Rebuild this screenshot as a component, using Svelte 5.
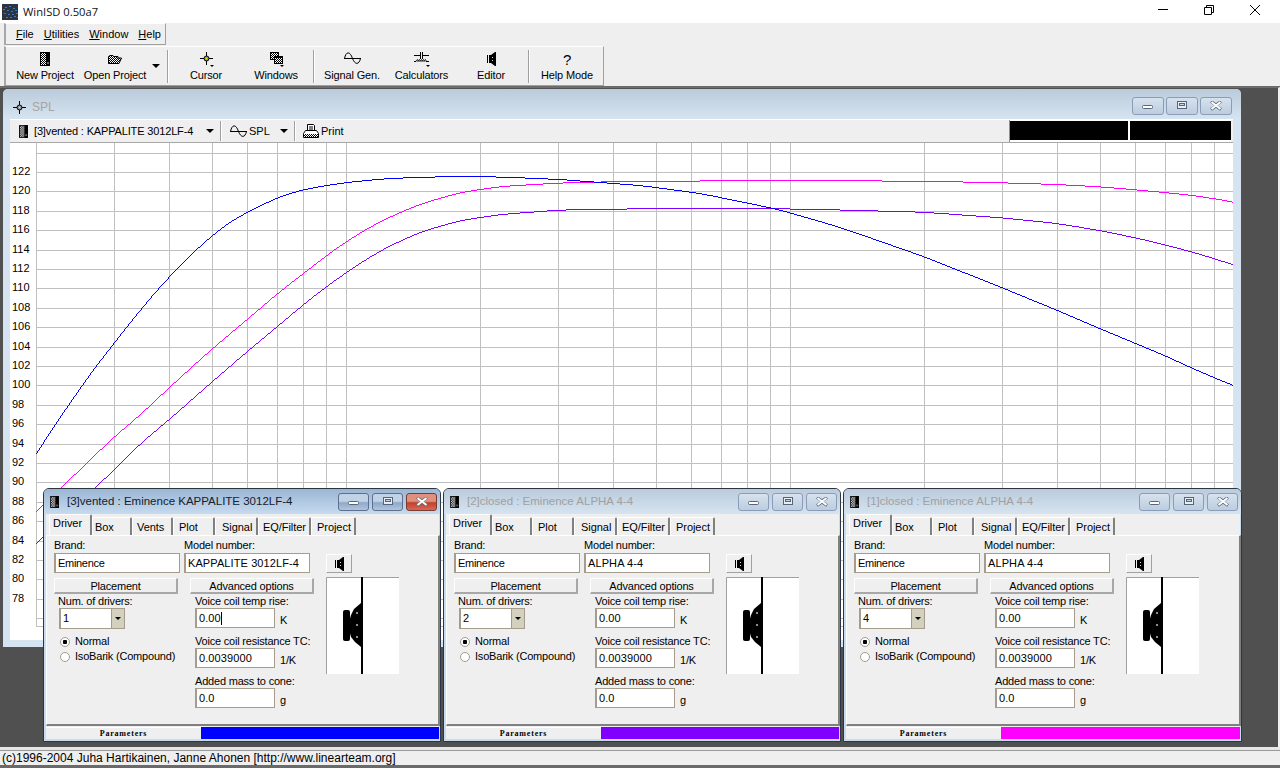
<script>
	const menus = [
		{ key: 'F', rest: 'ile' },
		{ key: 'U', rest: 'tilities' },
		{ key: 'W', rest: 'indow' },
		{ key: 'H', rest: 'elp' }
	];

	const tabSizes = {
		Driver: [43, 3],
		Box: [40, 2],
		Vents: [41, 4],
		Plot: [42, 5],
		Signal: [43, 6],
		'EQ/Filter': [53, 4],
		Project: [45, 5]
	};

	const windows = [
		{
			left: 43, width: 398, active: true, title: '[3]vented : Eminence KAPPALITE 3012LF-4',
			model: 'KAPPALITE 3012LF-4', drivers: '1', color: '#0000ff', caret: true,
			tabs: ['Driver', 'Box', 'Vents', 'Plot', 'Signal', 'EQ/Filter', 'Project']
		},
		{
			left: 443, width: 398, active: false, title: '[2]closed : Eminence ALPHA 4-4',
			model: 'ALPHA 4-4', drivers: '2', color: '#8000ff', caret: false,
			tabs: ['Driver', 'Box', 'Plot', 'Signal', 'EQ/Filter', 'Project']
		},
		{
			left: 843, width: 399, active: false, title: '[1]closed : Eminence ALPHA 4-4',
			model: 'ALPHA 4-4', drivers: '4', color: '#ff00ff', caret: false,
			tabs: ['Driver', 'Box', 'Plot', 'Signal', 'EQ/Filter', 'Project']
		}
	];

	// log frequency grid, one decade is 444px
	const vlines = [];
	for (const decade of [1, 10, 100]) {
		for (let n = 2; n <= 10; n++) {
			const x = 346 + 444 * Math.log10((n * decade) / 10);
			if (x < 1233) vlines.push(Math.round(x) + 0.5);
		}
	}

	const dbLabels = [];
	for (let i = 0; i <= 22; i++) dbLabels.push({ text: 122 - i * 2, y: Math.round(172 + i * 19.4) });
	const hlines = [153, ...dbLabels.map((l) => l.y), 618, 626];

	const blue = [
		[36, 453], [57, 420], [70, 402], [87, 377], [114, 342], [137, 313], [158, 288], [170, 275], [200, 245],
		[212, 235], [227, 223], [248, 211], [267, 202], [277, 197], [303, 189], [326, 185], [346, 182], [387, 178],
		[450, 176], [500, 176.5], [560, 179], [640, 185], [700, 193], [778, 209], [840, 227], [923, 256], [1001, 287],
		[1057, 310], [1099, 328], [1135, 343], [1164, 355], [1190, 367], [1213, 377], [1233, 385]
	];
	const magenta = [
		[36, 511], [60, 488], [88, 461], [114, 436], [137, 417], [170, 386], [212, 348], [248, 318], [277, 293],
		[303, 273], [326, 255], [346, 241], [367, 228], [387, 217.5], [420, 203.5], [460, 192], [500, 186], [560, 182.5],
		[620, 181], [700, 180.5], [780, 180], [840, 180.3], [923, 180.7], [1001, 182.3], [1057, 184], [1099, 186.3],
		[1135, 189.3], [1164, 192], [1190, 194.7], [1213, 198], [1233, 201.7]
	];
	const violet = [
		[36, 543], [64, 516], [94, 488], [114, 469], [140, 443], [170, 418], [212, 381], [248, 350], [277, 326],
		[303, 304], [326, 286], [346, 272], [367, 258], [387, 246.5], [420, 231.5], [460, 220], [500, 214], [560, 209.5],
		[620, 208.5], [700, 208.3], [780, 208.3], [840, 209.5], [923, 211.7], [1001, 217.3], [1057, 223], [1099, 230],
		[1135, 237.3], [1164, 244.3], [1190, 251], [1213, 258], [1233, 264.3]
	];

	function lerp(points, x) {
		for (let i = 0; i < points.length - 1; i++) {
			const a = points[i];
			const b = points[i + 1];
			if (x <= b[0]) return a[1] + ((b[1] - a[1]) * (x - a[0])) / (b[0] - a[0]);
		}
		return points[points.length - 1][1];
	}

	// smoothed trace drawn pixel by pixel, the plot has no antialiasing
	function trace(points) {
		let d = '';
		let prev = null;
		for (let x = 36; x < 1233; x++) {
			const w = Math.min(20, x - 36, 1233 - x);
			let sum = 0;
			let weight = 0;
			for (let k = -w; k <= w; k++) {
				const t = w + 1 - Math.abs(k);
				sum += lerp(points, x + k) * t;
				weight += t;
			}
			const y = Math.round(sum / weight);
			let top = y;
			let h = 1;
			if (prev !== null && y > prev + 1) {
				top = prev + 1;
				h = y - prev;
			} else if (prev !== null && y < prev - 1) {
				h = prev - y;
			}
			d += `M${x} ${top}h1v${h}h-1z`;
			prev = y;
		}
		return d;
	}

	// speckled app icon
	const specks = [
		[3, 3], [7, 2], [11, 4], [5, 6], [9, 7], [13, 6], [2, 9], [6, 10], [10, 10], [14, 9], [4, 13], [8, 13], [12, 12], [1, 5], [15, 13]
	];
</script>

{#snippet box(w, h)}
	<svg class="ico" width={w} height={h} viewBox="0 0 10 14">
		<rect x="0.5" y="0.5" width="9" height="13" fill="url(#dither)" stroke="#000" />
		<rect x="6" y="0" width="4" height="14" fill="#000" />
		<rect x="7" y="10" width="2" height="2" fill="#666" />
	</svg>
{/snippet}

{#snippet cross()}
	<svg class="ico" width="13" height="13" viewBox="0 0 13 13">
		<path d="M0 6.5H13M6.5 0V13" stroke="#000" fill="none" />
		<circle cx="6.5" cy="6.5" r="2.5" fill="#999" stroke="#000" />
		<rect x="6" y="6" width="1" height="1" fill="#ff0" />
	</svg>
{/snippet}

{#snippet speaker()}
	<svg class="ico" width="9" height="14" viewBox="0 0 9 14">
		<path d="M0 3H1V11H0ZM2 3H3V11H2ZM3 3H4L8 0H9V14H8L4 11H3Z" fill="#000" />
		<rect x="5" y="5" width="1" height="1" fill="#ddd" />
		<rect x="5" y="8" width="1" height="1" fill="#ddd" />
	</svg>
{/snippet}

{#snippet sine()}
	<svg class="ico" width="17" height="12" viewBox="0 0 17 12">
		<path d="M0 6.5H17M0.5 6.5C2 -1 6 -1 8.5 6.5C11 13 15 13 16.5 6.5" stroke="#000" fill="none" />
	</svg>
{/snippet}

{#snippet caption(kind)}
	<span class="capbtn" class:danger={kind === 'close'}>
		<svg width="14" height="10" viewBox="0 0 14 10">
			{#if kind === 'min'}
				<rect x="1.5" y="4.5" width="10" height="3" rx="1" fill="#fff" stroke="#56657c" />
			{:else if kind === 'max'}
				<rect x="2.5" y="0.5" width="9" height="7" fill="#e8eef6" stroke="#56657c" />
				<rect x="4.5" y="2.5" width="5" height="2" fill="#c6d4e4" stroke="#56657c" />
			{:else}
				<path d="M2 0.5L7 4L12 0.5M2 8.5L7 5L12 8.5" stroke="#5d6a7c" stroke-width="3" fill="none" />
				<path d="M2.5 1L11.5 8M11.5 1L2.5 8" stroke="#fff" stroke-width="2" fill="none" />
			{/if}
		</svg>
	</span>
{/snippet}

<svg class="defs" width="0" height="0">
	<defs>
		<pattern id="dither" width="2" height="2" patternUnits="userSpaceOnUse">
			<rect width="2" height="2" fill="#fff" />
			<rect width="1" height="1" fill="#000" />
			<rect x="1" y="1" width="1" height="1" fill="#000" />
		</pattern>
	</defs>
</svg>

<div class="app">
	<header class="titlebar">
		<svg class="appicon" width="16" height="16" viewBox="0 0 16 16">
			<rect width="16" height="16" fill="#2b3440" />
			{#each specks as s}
				<rect x={s[0]} y={s[1]} width="2" height="1" fill="#3a78c8" />
			{/each}
		</svg>
		<span class="apptitle">WinISD 0.50a7</span>
		<div class="winctl">
			<svg width="12" height="12" viewBox="0 0 12 12"><path d="M1 5.5H11" stroke="#000" fill="none" /></svg>
			<svg width="12" height="12" viewBox="0 0 12 12"><path d="M1.5 3.5H8.5V10.5H1.5ZM3.5 3.5V1.5H10.5V8.5H8.5" stroke="#000" fill="none" /></svg>
			<svg width="12" height="12" viewBox="0 0 12 12"><path d="M1 1L11 11M11 1L1 11" stroke="#000" fill="none" /></svg>
		</div>
	</header>

	<div class="menuband">
		<nav class="menu">
			{#each menus as m}
				<span><u>{m.key}</u>{m.rest}</span>
			{/each}
		</nav>
	</div>

	<div class="toolband">
		<div class="toolbar">
			<button class="tool">{@render box(10, 14)}<span>New Project</span></button>
			<button class="tool">
				<svg class="ico open" width="14" height="9" viewBox="0 0 14 9">
					<path d="M0.5 8.5V1.5L2 0.5H5L6 1.5H10V3H13.5L11 8.5Z" fill="url(#dither)" stroke="#000" />
				</svg>
				<span>Open Project</span>
			</button>
			<i class="drop"></i>
			<i class="sep first"></i>
			<button class="tool">
				<span class="with-drop">{@render cross()}<i class="mini"></i></span>
				<span>Cursor</span>
			</button>
			<button class="tool">
				<span class="with-drop">
					<svg class="ico" width="13" height="12" viewBox="0 0 13 12">
						<rect x="0.5" y="0.5" width="8" height="7" fill="url(#dither)" stroke="#000" />
						<rect x="4.5" y="4.5" width="8" height="7" fill="url(#dither)" stroke="#000" />
						<rect x="4" y="4" width="9" height="2" fill="#000" />
					</svg>
					<i class="mini"></i>
				</span>
				<span>Windows</span>
			</button>
			<i class="sep"></i>
			<button class="tool">{@render sine()}<span>Signal Gen.</span></button>
			<button class="tool calc">
				<span class="with-drop">
					<svg class="ico" width="15" height="11" viewBox="0 0 15 11">
						<path d="M0 3.5H6M9 3.5H15M6.5 0V7M8.5 0V7M0 9.5H2" stroke="#000" fill="none" />
						<path d="M2 9.5C3 7 4 7 4 9.5C5 7 6 7 6 9.5C7 7 8 7 8 9.5C9 7 10 7 10 9.5C11 7 12 7 12 9.5H15" stroke="#000" fill="none" />
					</svg>
					<i class="mini"></i>
				</span>
				<span>Calculators</span>
			</button>
			<button class="tool">{@render speaker()}<span>Editor</span></button>
			<i class="sep"></i>
			<button class="tool"><b class="help">?</b><span>Help Mode</span></button>
		</div>
	</div>

	<main class="desktop">
		<section class="spl">
			<div class="spl-title">
				<span class="spl-icon">{@render cross()}</span>
				<span class="spl-name">SPL</span>
				<div class="capbtns">
					{@render caption('min')}
					{@render caption('max')}
					{@render caption('close')}
				</div>
			</div>
			<div class="spl-tools">
				<span class="sp-icon">{@render box(9, 13)}</span>
				<span class="sp-name">[3]vented : KAPPALITE 3012LF-4</span>
				<i class="drop"></i>
				<i class="sep small"></i>
				<span class="sp-sine">{@render sine()}</span>
				<span class="sp-spl">SPL</span>
				<i class="drop"></i>
				<i class="sep small"></i>
				<svg class="ico sp-print" width="16" height="15" viewBox="0 0 16 15">
					<path d="M4.5 0.5H10.5L11.5 1.5V6.5H4.5Z" fill="#fff" stroke="#000" />
					<path d="M6 3H10M6 5H10" stroke="#000" />
					<path d="M2.5 6.5H13.5L15.5 9.5V13.5H0.5V9.5Z" fill="#fff" stroke="#000" />
					<rect x="1" y="10" width="14" height="3" fill="url(#dither)" />
				</svg>
				<span class="sp-label">Print</span>
				<div class="readouts"><i></i><i></i></div>
			</div>
			<svg class="chart" width="1223" height="497" viewBox="10 143 1223 497">
				<rect x="10" y="143" width="1223" height="497" fill="#fff" />
				{#each vlines as x}
					<line x1={x} x2={x} y1="143" y2="626" stroke="#c0c0c0" />
				{/each}
				{#each hlines as y}
					<line x1="36" x2="1233" y1={y + 0.5} y2={y + 0.5} stroke="#c0c0c0" />
				{/each}
				<path d={trace(magenta)} class="trace" fill="#ff00ff" />
				<path d={trace(violet)} class="trace" fill="#8000ff" />
				<path d={trace(blue)} class="trace" fill="#0000ff" />
				{#each dbLabels as l}
					<text x="12" y={l.y + 3} class="dblabel">{l.text}</text>
				{/each}
			</svg>
		</section>

		{#each windows as w}
			<section class="sub" class:active={w.active} style="left: {w.left}px; width: {w.width}px">
				<div class="sub-title">
					{@render box(9, 12)}
					<span class="sub-name">{w.title}</span>
					<div class="capbtns">
						{@render caption('min')}
						{@render caption('max')}
						{@render caption('close')}
					</div>
				</div>
				<div class="client">
					<div class="tabs">
						{#each w.tabs as t, i}
							<span
								class="tab"
								class:current={i === 0}
								style="width: {tabSizes[t][0]}px; padding-left: {tabSizes[t][1]}px">{t}</span>
						{/each}
					</div>
					<div class="page">
						<div class="row-top">
							<label class="field">
								<span>Brand:</span>
								<span class="input brand">Eminence</span>
							</label>
							<label class="field">
								<span>Model number:</span>
								<span class="input">{w.model}</span>
							</label>
							<span class="spk-btn">{@render speaker()}</span>
						</div>
						<div class="row-main">
							<div class="col">
								<span class="btn">Placement</span>
								<span class="lbl">Num. of drivers:</span>
								<span class="combo"><span>{w.drivers}</span><i><b></b></i></span>
								<span class="radio on first"><i></i>Normal</span>
								<span class="radio"><i></i>IsoBarik (Compound)</span>
							</div>
							<div class="col">
								<span class="btn">Advanced options</span>
								<span class="lbl">Voice coil temp rise:</span>
								<span class="unit-row">
									<span class="input short">0.00{#if w.caret}<i class="caret"></i>{/if}</span>
									<span class="unit">K</span>
								</span>
								<span class="lbl next">Voice coil resistance TC:</span>
								<span class="unit-row">
									<span class="input short">0.0039000</span>
									<span class="unit">1/K</span>
								</span>
								<span class="lbl next">Added mass to cone:</span>
								<span class="unit-row">
									<span class="input short">0.0</span>
									<span class="unit">g</span>
								</span>
							</div>
							<svg class="mount" width="73" height="97" viewBox="326 577 73 97">
								<rect x="326" y="577" width="73" height="97" fill="#fff" />
								<path d="M326.5 674V577.5H399" stroke="#a0a0a0" fill="none" />
								<rect x="361" y="577" width="2" height="97" fill="#000" />
								<rect x="343" y="610" width="7" height="31" rx="2" fill="#000" />
								<path d="M361 603L354 609L351 615L349 622V630L351 637L355 642L361 647Z" fill="#000" />
								<circle cx="357" cy="613" r="1" fill="#bbb" />
								<circle cx="357" cy="625" r="1" fill="#bbb" />
								<circle cx="357" cy="637" r="1" fill="#bbb" />
							</svg>
						</div>
					</div>
					<div class="strip">
						<span class="params">Parameters</span>
						<i style="background: {w.color}"></i>
					</div>
				</div>
			</section>
		{/each}
	</main>

	<footer class="status">
		<span>(c)1996-2004 Juha Hartikainen, Janne Ahonen [http://www.linearteam.org]</span>
	</footer>
</div>

<style>
	:global(body) {
		margin: 0;
		background: #efefef;
	}
	.defs {
		position: absolute;
	}
	.app {
		width: 1280px;
		height: 768px;
		overflow: hidden;
		display: flex;
		flex-direction: column;
		font: 11px/13px 'Liberation Sans', Arial, sans-serif;
		color: #000;
	}
	.ico {
		display: block;
		flex: none;
	}
	i {
		font-style: normal;
		display: block;
	}

	.titlebar {
		height: 23px;
		flex: none;
		background: #fff;
		display: flex;
		align-items: center;
		padding-left: 2px;
		box-sizing: border-box;
	}
	.appicon {
		display: block;
	}
	.apptitle {
		margin-left: 5px;
		font: 11.2px 'Open Sans', sans-serif;
		color: #111;
	}
	.winctl {
		margin-left: auto;
		display: flex;
		gap: 34px;
		padding-right: 19px;
		margin-top: -3px;
	}
	.winctl svg {
		display: block;
	}

	.menuband {
		height: 23px;
		flex: none;
		background: #efefef;
	}
	.menu {
		width: 162px;
		height: 22px;
		margin-left: 4px;
		box-sizing: border-box;
		border-left: 2px solid #a8a8a8;
		border-right: 1px solid #a0a0a0;
		border-bottom: 1px solid #a0a0a0;
		border-top: 1px solid #fff;
		display: flex;
		align-items: center;
		gap: 10px;
		padding-left: 10px;
	}

	.toolband {
		height: 41px;
		flex: none;
		background: #efefef;
		border-bottom: 1px solid #6a6a6a;
		box-sizing: border-box;
	}
	.toolbar {
		width: 600px;
		height: 40px;
		margin-left: 4px;
		box-sizing: border-box;
		border-left: 2px solid #a8a8a8;
		border-top: 1px solid #fff;
		border-right: 1px solid #a0a0a0;
		border-bottom: 1px solid #a0a0a0;
		display: flex;
		padding-left: 4px;
	}
	.tool {
		all: unset;
		width: 70px;
		flex: none;
		height: 38px;
		display: flex;
		flex-direction: column;
		align-items: center;
		justify-content: space-between;
		padding: 5px 0 3px;
		box-sizing: border-box;
		font-size: 11px;
		letter-spacing: -0.15px;
		line-height: 13px;
	}
	.tool.calc {
		width: 69px;
	}
	.open {
		margin-top: 3px;
	}
	.with-drop {
		position: relative;
		display: block;
	}
	.mini {
		position: absolute;
		right: -1px;
		top: 13px;
		width: 0;
		height: 0;
		border-left: 2px solid transparent;
		border-right: 2px solid transparent;
		border-top: 2px solid #000;
	}
	.help {
		font-weight: normal;
		font-size: 15px;
		line-height: 16px;
	}
	.drop {
		width: 0;
		height: 0;
		border-left: 4px solid transparent;
		border-right: 4px solid transparent;
		border-top: 4px solid #000;
		flex: none;
	}
	.toolbar .drop {
		margin: 17px 2px 0;
	}
	.sep {
		width: 1px;
		flex: none;
		background: #a0a0a0;
		border-right: 1px solid #fff;
		margin: 3px 2px 2px;
	}
	.sep.first {
		margin-left: 5px;
	}

	.desktop {
		flex: 1;
		position: relative;
		background: #505050;
		border-top: 1px solid #6e6e6e;
		border-right: 2px solid #efefef;
		overflow: hidden;
	}
	.spl {
		position: absolute;
		left: 3px;
		top: 1px;
		width: 1238px;
		height: 558px;
		box-sizing: border-box;
		background: #d6e4f1;
		border-radius: 5px 5px 0 0;
		padding: 0 8px 7px 7px;
		display: flex;
		flex-direction: column;
	}
	.spl-title {
		height: 30px;
		flex: none;
		margin: 0 -8px 0 -7px;
		padding: 3px 9px 0 10px;
		box-sizing: border-box;
		background: linear-gradient(#bbcbdb, #d6e4f1);
		display: flex;
		align-items: center;
		border-radius: 5px 5px 0 0;
		color: #a4a4a4;
		font-size: 12px;
	}
	.spl-icon {
		margin-top: 4px;
	}
	.spl-name {
		margin: 4px 0 0 6px;
	}
	.spl-title > .capbtns {
		margin-left: auto;
		gap: 2px;
	}
	.capbtns {
		margin-left: auto;
		display: flex;
		gap: 3px;
	}
	.capbtn {
		width: 32px;
		height: 18px;
		box-sizing: border-box;
		border: 1px solid #8a9cb8;
		border-radius: 3px;
		background: linear-gradient(#d6e2ef, #bccddf);
		display: flex;
		align-items: center;
		justify-content: center;
	}
	.spl-tools {
		height: 24px;
		flex: none;
		box-sizing: border-box;
		background: #efefef;
		border-top: 1px solid #fff;
		border-bottom: 1px solid #a8a8a8;
		display: flex;
		align-items: center;
		font-size: 11px;
	}
	.sp-icon {
		margin-left: 9px;
	}
	.sp-name {
		margin-left: 6px;
		width: 172px;
		white-space: nowrap;
		letter-spacing: -0.15px;
	}
	.sep.small {
		height: 20px;
		margin: 0 0 0 6px;
	}
	.sp-sine {
		margin-left: 8px;
	}
	.sp-spl {
		margin-left: 2px;
		width: 31px;
	}
	.sp-print {
		margin-left: 7px;
	}
	.sp-label {
		margin-left: 2px;
	}
	.readouts {
		margin-left: auto;
		margin-right: 2px;
		display: flex;
		gap: 2px;
		background: #fff;
		padding: 1px 0 2px;
		border-left: 1px solid #909090;
	}
	.readouts i {
		height: 19px;
		width: 118px;
		background: #000;
	}
	.readouts i + i {
		width: 101px;
	}
	.chart {
		display: block;
		flex: none;
	}
	.trace {
		shape-rendering: crispEdges;
	}
	.dblabel {
		font: 11px 'Liberation Sans', Arial, sans-serif;
		fill: #000;
	}

	.sub {
		position: absolute;
		top: 400px;
		height: 254px;
		box-sizing: border-box;
		border: 1px solid #2c3540;
		border-radius: 6px 6px 0 0;
		padding: 0 1px 2px 2px;
		background: #c8dcf0;
		display: flex;
		flex-direction: column;
	}
	.sub-title {
		height: 25px;
		flex: none;
		box-sizing: border-box;
		margin: 0 -1px 0 -2px;
		padding: 0 3px 0 6px;
		display: flex;
		align-items: center;
		background: linear-gradient(#bbcbdb, #d6e4f1);
		border-radius: 5px 5px 0 0;
		color: #a0a0a0;
		font-size: 11.5px;
	}
	.active .sub-title {
		background: linear-gradient(#9bb6d4, #c6daef);
		color: #14202e;
	}
	.active .capbtn {
		background: linear-gradient(#c0d2e6 45%, #8fa9c8 55%, #b0c6de);
		border-color: #5d6f8c;
	}
	.active .capbtn.danger {
		background: linear-gradient(#e0907e 45%, #c2402c 55%, #d66a55);
		border-color: #7a3a34;
	}
	.sub-name {
		margin-left: 8px;
		white-space: nowrap;
	}
	.sub .capbtn {
		width: 31px;
	}
	.client {
		flex: 1;
		background: #efefef;
		display: flex;
		flex-direction: column;
		min-height: 0;
	}
	.tabs {
		height: 21px;
		flex: none;
		display: flex;
		align-items: flex-end;
		padding-left: 3px;
	}
	.tab {
		height: 18px;
		box-sizing: border-box;
		border-top: 1px solid #fff;
		border-left: 1px solid #fff;
		border-right: 2px solid #808080;
		border-radius: 2px 2px 0 0;
		padding-top: 3px;
		font-size: 11px;
		letter-spacing: -0.05px;
	}
	.tab.current {
		height: 21px;
		padding-top: 2px;
		background: #efefef;
	}
	.page {
		flex: 1;
		box-sizing: border-box;
		border-top: 1px solid #fff;
		border-right: 2px solid #808080;
		border-bottom: 2px solid #808080;
		border-left: 1px solid #fff;
		padding: 3px 0 0 7px;
		margin-right: -1px;
		font-size: 11px;
		letter-spacing: -0.2px;
	}
	.row-top {
		display: flex;
		align-items: flex-end;
		gap: 4px;
	}
	.field {
		display: flex;
		flex-direction: column;
		width: 126px;
	}
	.field > span:first-child {
		height: 14px;
		line-height: 13px;
	}
	.input {
		height: 20px;
		box-sizing: border-box;
		background: #fff;
		border: 1px solid #a59c8c;
		border-width: 1px 1px 1px 2px;
		padding-left: 2px;
		line-height: 18px;
		white-space: nowrap;
		display: block;
		overflow: hidden;
		letter-spacing: 0.1px;
	}
	.input.brand {
		letter-spacing: -0.3px;
	}
	.short {
		width: 80px;
		display: inline-flex;
		align-items: center;
	}
	.caret {
		width: 1px;
		height: 13px;
		background: #000;
	}
	.spk-btn {
		width: 26px;
		height: 19px;
		margin-left: 12px;
		box-sizing: border-box;
		background: #efefef;
		border-top: 1px solid #fff;
		border-left: 1px solid #fff;
		border-right: 1px solid #a0a0a0;
		border-bottom: 1px solid #a0a0a0;
		display: flex;
		align-items: center;
		justify-content: center;
	}
	.row-main {
		display: flex;
		gap: 12px;
		margin-top: 5px;
	}
	.col {
		width: 124px;
		display: flex;
		flex-direction: column;
	}
	.btn {
		height: 16px;
		box-sizing: border-box;
		border-top: 1px solid #fff;
		border-left: 1px solid #fff;
		border-right: 2px solid #a8a8a8;
		border-bottom: 2px solid #a8a8a8;
		text-align: center;
		line-height: 14px;
	}
	.lbl {
		height: 13px;
		padding-left: 5px;
		white-space: nowrap;
		margin-top: 1px;
	}
	.col:first-child .lbl {
		padding-left: 4px;
	}
	.lbl.next {
		margin-top: 7px;
		height: 13px;
	}
	.combo {
		width: 66px;
		height: 21px;
		margin-left: 5px;
		box-sizing: border-box;
		background: #fff;
		border: 1px solid #a59c8c;
		border-left-width: 2px;
		display: flex;
		align-items: center;
		justify-content: space-between;
		padding-left: 2px;
	}
	.combo i {
		width: 12px;
		height: 100%;
		background: #d4d0c0;
		border-left: 1px solid #a59c8c;
		display: flex;
		align-items: center;
		justify-content: center;
	}
	.combo b {
		display: block;
		width: 0;
		height: 0;
		border-left: 3px solid transparent;
		border-right: 3px solid transparent;
		border-top: 3px solid #000;
	}
	.radio {
		height: 15px;
		display: flex;
		align-items: center;
		margin-left: 6px;
		gap: 5px;
		white-space: nowrap;
	}
	.radio.first {
		margin-top: 5px;
	}
	.radio i {
		width: 10px;
		height: 10px;
		box-sizing: border-box;
		border: 1px solid #a59c8c;
		border-radius: 50%;
		background: #fff;
		flex: none;
	}
	.radio.on i {
		background: radial-gradient(circle, #000 2px, #fff 2.5px);
	}
	.unit-row {
		display: flex;
		margin-left: 5px;
		height: 20px;
	}
	.unit {
		margin: 6px 0 0 5px;
	}
	.mount {
		display: block;
		margin-top: -1px;
	}
	.strip {
		height: 12px;
		flex: none;
		margin-top: 1px;
		display: flex;
	}
	.params {
		width: 155px;
		flex: none;
		text-align: center;
		font: bold 8px/12px 'Liberation Serif', serif;
		letter-spacing: 0.8px;
		background: #efefef;
		border-top: 1px solid #fff;
		box-sizing: border-box;
	}
	.strip i {
		flex: 1;
	}

	.status {
		height: 21px;
		flex: none;
		box-sizing: border-box;
		background: #efefef;
		border-top: 3px solid #e6e6e6;
		border-bottom: 3px solid #6a6a6a;
		padding: 1px 0 0 2px;
		font-size: 12px;
		line-height: 15px;
		box-shadow: inset 0 1px 0 #9a9a9a;
		white-space: nowrap;
	}
</style>
